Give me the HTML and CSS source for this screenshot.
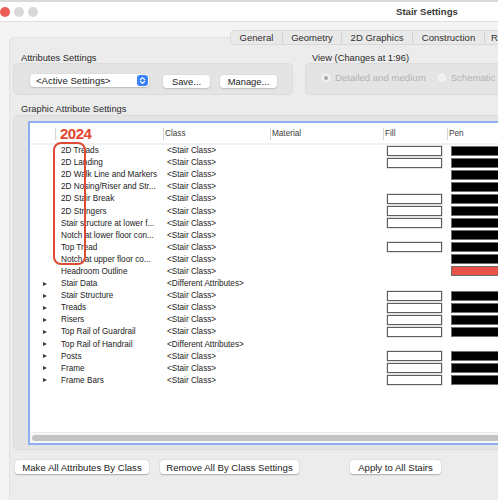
FILE: index.html
```html
<!DOCTYPE html>
<html>
<head>
<meta charset="utf-8">
<title>Stair Settings</title>
<link rel="stylesheet" href="styles.css">
</head>
<body>
<div class="window">
  <div class="titlebar">
    <div class="lights"><span class="light red"></span><span class="light"></span><span class="light"></span></div>
    <div class="title">Stair Settings</div>
  </div>
  <div class="content">
    <div class="tabs">
      <div class="tab t1">General</div>
      <div class="tab t2">Geometry</div>
      <div class="tab t3">2D Graphics</div>
      <div class="tab t4">Construction</div>
      <div class="tab t5">Railings</div>
    </div>
    <div class="tabbox">
      <div class="toprow">
        <div class="attrcol">
          <div class="glabel">Attributes Settings</div>
          <div class="gbox attrbox">
            <div class="popup">
              <span class="popup-text">&lt;Active Settings&gt;</span>
              <span class="popup-arrow"><svg width="11" height="11" viewBox="0 0 11 11"><polyline points="3.4,4.6 5.5,2.6 7.6,4.6" fill="none" stroke="#fff" stroke-width="1.2" stroke-linecap="round" stroke-linejoin="round"/><polyline points="3.4,6.4 5.5,8.4 7.6,6.4" fill="none" stroke="#fff" stroke-width="1.2" stroke-linecap="round" stroke-linejoin="round"/></svg></span>
            </div>
            <div class="btn save">Save...</div>
            <div class="btn manage">Manage...</div>
          </div>
        </div>
        <div class="viewcol">
          <div class="glabel">View (Changes at 1:96)</div>
          <div class="gbox viewbox">
            <span class="radio on"></span><span class="rlabel">Detailed and medium</span>
            <span class="radio r2"></span><span class="rlabel">Schematic</span>
          </div>
        </div>
      </div>
      <div class="glabel g2">Graphic Attribute Settings</div>
      <div class="gbox graphbox">
        <div class="table">
          <div class="thead">
            <span class="hc-tree"></span>
            <span class="hc hc-name"><span class="year">2024</span></span>
            <span class="hc">Class</span>
            <span class="hc">Material</span>
            <span class="hc">Fill</span>
            <span class="hc">Pen</span>
          </div>
          <div class="row"><span class="c-tree"></span><span class="c-name">2D Treads</span><span class="c-class">&lt;Stair Class&gt;</span><span class="c-mat"></span><span class="c-fill"><i class="fillbox"></i></span><span class="c-pen"><i class="penbox"></i></span></div>
          <div class="row"><span class="c-tree"></span><span class="c-name">2D Landing</span><span class="c-class">&lt;Stair Class&gt;</span><span class="c-mat"></span><span class="c-fill"><i class="fillbox"></i></span><span class="c-pen"><i class="penbox"></i></span></div>
          <div class="row"><span class="c-tree"></span><span class="c-name">2D Walk Line and Markers</span><span class="c-class">&lt;Stair Class&gt;</span><span class="c-mat"></span><span class="c-fill"></span><span class="c-pen"><i class="penbox"></i></span></div>
          <div class="row"><span class="c-tree"></span><span class="c-name">2D Nosing/Riser and Str...</span><span class="c-class">&lt;Stair Class&gt;</span><span class="c-mat"></span><span class="c-fill"></span><span class="c-pen"><i class="penbox"></i></span></div>
          <div class="row"><span class="c-tree"></span><span class="c-name">2D Stair Break</span><span class="c-class">&lt;Stair Class&gt;</span><span class="c-mat"></span><span class="c-fill"><i class="fillbox"></i></span><span class="c-pen"><i class="penbox"></i></span></div>
          <div class="row"><span class="c-tree"></span><span class="c-name">2D Stringers</span><span class="c-class">&lt;Stair Class&gt;</span><span class="c-mat"></span><span class="c-fill"><i class="fillbox"></i></span><span class="c-pen"><i class="penbox"></i></span></div>
          <div class="row"><span class="c-tree"></span><span class="c-name">Stair structure at lower f...</span><span class="c-class">&lt;Stair Class&gt;</span><span class="c-mat"></span><span class="c-fill"><i class="fillbox"></i></span><span class="c-pen"><i class="penbox"></i></span></div>
          <div class="row"><span class="c-tree"></span><span class="c-name">Notch at lower floor con...</span><span class="c-class">&lt;Stair Class&gt;</span><span class="c-mat"></span><span class="c-fill"></span><span class="c-pen"><i class="penbox"></i></span></div>
          <div class="row"><span class="c-tree"></span><span class="c-name">Top Tread</span><span class="c-class">&lt;Stair Class&gt;</span><span class="c-mat"></span><span class="c-fill"><i class="fillbox"></i></span><span class="c-pen"><i class="penbox"></i></span></div>
          <div class="row"><span class="c-tree"></span><span class="c-name">Notch at upper floor co...</span><span class="c-class">&lt;Stair Class&gt;</span><span class="c-mat"></span><span class="c-fill"></span><span class="c-pen"><i class="penbox"></i></span></div>
          <div class="row"><span class="c-tree"></span><span class="c-name">Headroom Outline</span><span class="c-class">&lt;Stair Class&gt;</span><span class="c-mat"></span><span class="c-fill"></span><span class="c-pen"><i class="penbox red"></i></span></div>
          <div class="row"><span class="c-tree"><i class="tri"></i></span><span class="c-name">Stair Data</span><span class="c-class">&lt;Different Attributes&gt;</span><span class="c-mat"></span><span class="c-fill"></span><span class="c-pen"></span></div>
          <div class="row"><span class="c-tree"><i class="tri"></i></span><span class="c-name">Stair Structure</span><span class="c-class">&lt;Stair Class&gt;</span><span class="c-mat"></span><span class="c-fill"><i class="fillbox"></i></span><span class="c-pen"><i class="penbox"></i></span></div>
          <div class="row"><span class="c-tree"><i class="tri"></i></span><span class="c-name">Treads</span><span class="c-class">&lt;Stair Class&gt;</span><span class="c-mat"></span><span class="c-fill"><i class="fillbox"></i></span><span class="c-pen"><i class="penbox"></i></span></div>
          <div class="row"><span class="c-tree"><i class="tri"></i></span><span class="c-name">Risers</span><span class="c-class">&lt;Stair Class&gt;</span><span class="c-mat"></span><span class="c-fill"><i class="fillbox"></i></span><span class="c-pen"><i class="penbox"></i></span></div>
          <div class="row"><span class="c-tree"><i class="tri"></i></span><span class="c-name">Top Rail of Guardrail</span><span class="c-class">&lt;Stair Class&gt;</span><span class="c-mat"></span><span class="c-fill"><i class="fillbox"></i></span><span class="c-pen"><i class="penbox"></i></span></div>
          <div class="row"><span class="c-tree"><i class="tri"></i></span><span class="c-name">Top Rail of Handrail</span><span class="c-class">&lt;Different Attributes&gt;</span><span class="c-mat"></span><span class="c-fill"></span><span class="c-pen"></span></div>
          <div class="row"><span class="c-tree"><i class="tri"></i></span><span class="c-name">Posts</span><span class="c-class">&lt;Stair Class&gt;</span><span class="c-mat"></span><span class="c-fill"><i class="fillbox"></i></span><span class="c-pen"><i class="penbox"></i></span></div>
          <div class="row"><span class="c-tree"><i class="tri"></i></span><span class="c-name">Frame</span><span class="c-class">&lt;Stair Class&gt;</span><span class="c-mat"></span><span class="c-fill"><i class="fillbox"></i></span><span class="c-pen"><i class="penbox"></i></span></div>
          <div class="row"><span class="c-tree"><i class="tri"></i></span><span class="c-name">Frame Bars</span><span class="c-class">&lt;Stair Class&gt;</span><span class="c-mat"></span><span class="c-fill"><i class="fillbox"></i></span><span class="c-pen"><i class="penbox"></i></span></div>
          <div class="filler"></div>
          <div class="hscroll"><div class="thumb"></div></div>
          <div class="annot"></div>
        </div>
      </div>
      <div class="bottom">
        <div class="btn b1">Make All Attributes By Class</div>
        <div class="btn b2">Remove All By Class Settings</div>
        <div class="btn b3">Apply to All Stairs</div>
      </div>
    </div>
  </div>
</div>
</body>
</html>
```

FILE: styles.css
```css
html, body {
  margin: 0;
  padding: 0;
  overflow: hidden;
}
body {
  width: 498px;
  height: 500px;
  background: #f4f4f4;
  font-family: "Liberation Sans", Arial, sans-serif;
  color: #262626;
}
.window {
  width: 900px;
}
.titlebar {
  height: 19px;
  border-top: 2px solid #d9d9d9;
  border-bottom: 1px solid #dfdfdf;
  background: #ffffff;
  display: flex;
  align-items: center;
}
.lights {
  display: flex;
  gap: 4px;
}
.light {
  width: 10px;
  height: 10px;
  border-radius: 50%;
  background: #d8d8d8;
}
.light.red {
  background: #ec5f57;
}
.title {
  margin-left: 358px;
  font-size: 9.6px;
  font-weight: bold;
  color: #3a3a3a;
}
.content {
  background: #f4f4f4;
}
.tabs {
  position: relative;
  z-index: 1;
  margin-top: 8px;
  margin-left: 230px;
  margin-bottom: -8px;
  height: 15px;
  display: flex;
  align-items: center;
  background: #e9e9e9;
  border: 0.5px solid #d9d9d9;
  border-right: none;
  border-radius: 5px 0 0 5px;
  box-sizing: border-box;
}
.tab {
  font-size: 9.5px;
  color: #2e2e2e;
  text-align: center;
  line-height: 10px;
  border-left: 1px solid #cfcfcf;
  flex: none;
}
.tab.t1 { width: 51px; border-left: none; }
.tab.t2 { width: 58px; }
.tab.t3 { width: 70px; }
.tab.t4 { width: 71px; }
.tab.t5 { width: 60px; text-align: left; padding-left: 6px; }
.tabbox {
  margin-left: 9px;
  width: 700px;
  height: 480px;
  box-sizing: border-box;
  background: #ececec;
  border: 1px solid #e2e2e2;
  border-radius: 5px;
  padding: 15px 0 0 3px;
}
.toprow {
  display: flex;
  gap: 12px;
}
.attrcol {
  width: 280px;
}
.viewcol {
  width: 300px;
}
.glabel {
  font-size: 9.3px;
  line-height: 10px;
  height: 10px;
  padding-left: 8px;
  color: #2a2a2a;
  white-space: nowrap;
}
.viewcol .glabel {
  padding-left: 7px;
}
.gbox {
  box-sizing: border-box;
  background: #e4e4e4;
  border: 1px solid #dcdcdc;
  border-radius: 5px;
}
.attrbox {
  height: 32px;
  display: flex;
  align-items: flex-start;
  padding: 10px 0 0 16px;
}
.popup {
  width: 119px;
  height: 13px;
  box-sizing: border-box;
  background: #ffffff;
  border-radius: 3.5px;
  box-shadow: 0 0.5px 1.5px rgba(0,0,0,0.3);
  display: flex;
  align-items: center;
}
.popup-text {
  padding-left: 6px;
  font-size: 9.6px;
  color: #222;
  white-space: nowrap;
}
.popup-arrow {
  margin-left: auto;
  margin-right: 1px;
  width: 11px;
  height: 11px;
  background: #3b82f6;
  border-radius: 3px;
  display: flex;
}
.btn {
  height: 13px;
  box-sizing: border-box;
  background: #ffffff;
  border-radius: 3.5px;
  box-shadow: 0 0.5px 1.5px rgba(0,0,0,0.28);
  font-size: 9.4px;
  color: #222;
  display: flex;
  align-items: center;
  justify-content: center;
  white-space: nowrap;
  flex: none;
}
.btn.save {
  margin-left: 14px;
  margin-top: 1px;
  width: 47px;
}
.btn.manage {
  margin-left: 10px;
  margin-top: 1px;
  width: 57px;
}
.viewbox {
  height: 32px;
  display: flex;
  align-items: center;
  align-content: flex-start;
  padding: 8px 0 0 15px;
  flex-wrap: nowrap;
  box-sizing: border-box;
}
.viewbox > * {
  align-self: flex-start;
  margin-top: 1px;
}
.radio {
  width: 10px;
  height: 10px;
  border-radius: 50%;
  background: #f0f0f0;
  box-shadow: 0 0 0 0.5px #dadada;
  display: flex;
  align-items: center;
  justify-content: center;
  flex: none;
}
.radio.on::after {
  content: "";
  width: 4px;
  height: 4px;
  border-radius: 50%;
  background: #a6a6a6;
}
.radio.r2 {
  margin-left: 11px;
}
.rlabel {
  margin-left: 4px;
  font-size: 9.6px;
  line-height: 10px;
  color: #b2b2b2;
  white-space: nowrap;
}
.g2 {
  margin-top: 9px;
}
.graphbox {
  margin-top: 1px;
  height: 335px;
  width: 680px;
  padding: 5px 0 0 14px;
}
.table {
  position: relative;
  height: 323.5px;
  box-sizing: border-box;
  border: 2px solid #8fadf1;
  border-right: none;
  background: #ffffff;
  display: flex;
  flex-direction: column;
}
.thead, .row {
  display: grid;
  grid-template-columns: 25px 108px 107px 113px 64px 200px;
  align-items: center;
}
.thead {
  height: 21.5px;
  box-sizing: border-box;
  padding-top: 3px;
  border-bottom: 2px solid #f1f1f1;
}
.hc {
  height: 12px;
  line-height: 12px;
  border-left: 1px solid #d4d4d4;
  padding-left: 1px;
  font-size: 8.2px;
  color: #3c3c3c;
  white-space: nowrap;
}
.hc-name {
  padding-left: 4px;
  overflow: visible;
}
.year {
  font-size: 15px;
  font-weight: bold;
  letter-spacing: -0.5px;
  color: #e2452e;
  line-height: 12px;
  display: inline-block;
  position: relative;
  top: 0px;
}
.row {
  height: 12.1px;
  font-size: 8.2px;
  color: #222;
  white-space: nowrap;
}
.row > span {
  display: flex;
  align-items: center;
  height: 12.1px;
}
.c-tree {
  padding-left: 13px;
}
.c-name {
  padding-left: 6px;
}
.c-class {
  padding-left: 4px;
}
.c-fill, .c-pen {
  padding-left: 4px;
}
.tri {
  width: 0;
  height: 0;
  border-left: 4px solid #3a3a3a;
  border-top: 2.5px solid transparent;
  border-bottom: 2.5px solid transparent;
}
.fillbox {
  width: 55px;
  height: 10px;
  box-sizing: border-box;
  background: #ffffff;
  border: 1px solid #5e5e5e;
  box-shadow: 0 0 0 0.5px #c6c6c6;
}
.penbox {
  width: 80px;
  height: 10px;
  box-sizing: border-box;
  background: #000000;
  border: 1px solid #6f6f6f;
}
.penbox.red {
  background: #e9534a;
}
.filler {
  flex: 1;
}
.hscroll {
  height: 11px;
  box-sizing: border-box;
  background: #f7f7f7;
  border-top: 1px solid #ececec;
  display: flex;
  align-items: center;
}
.thumb {
  margin-left: 2px;
  width: 640px;
  height: 6px;
  border-radius: 3px;
  background: #c3c3c3;
}
.annot {
  position: absolute;
  left: 22.5px;
  top: 18.7px;
  width: 33.5px;
  height: 123px;
  box-sizing: border-box;
  border: 2.3px solid #df4a33;
  border-radius: 8px;
}
.bottom {
  margin-top: 10px;
  padding-left: 2px;
  display: flex;
}
.bottom .btn {
  height: 14px;
  font-size: 9.6px;
}
.btn.b1 { width: 134px; }
.btn.b2 { width: 139px; margin-left: 11px; }
.btn.b3 { width: 91px; margin-left: 51px; }
```
